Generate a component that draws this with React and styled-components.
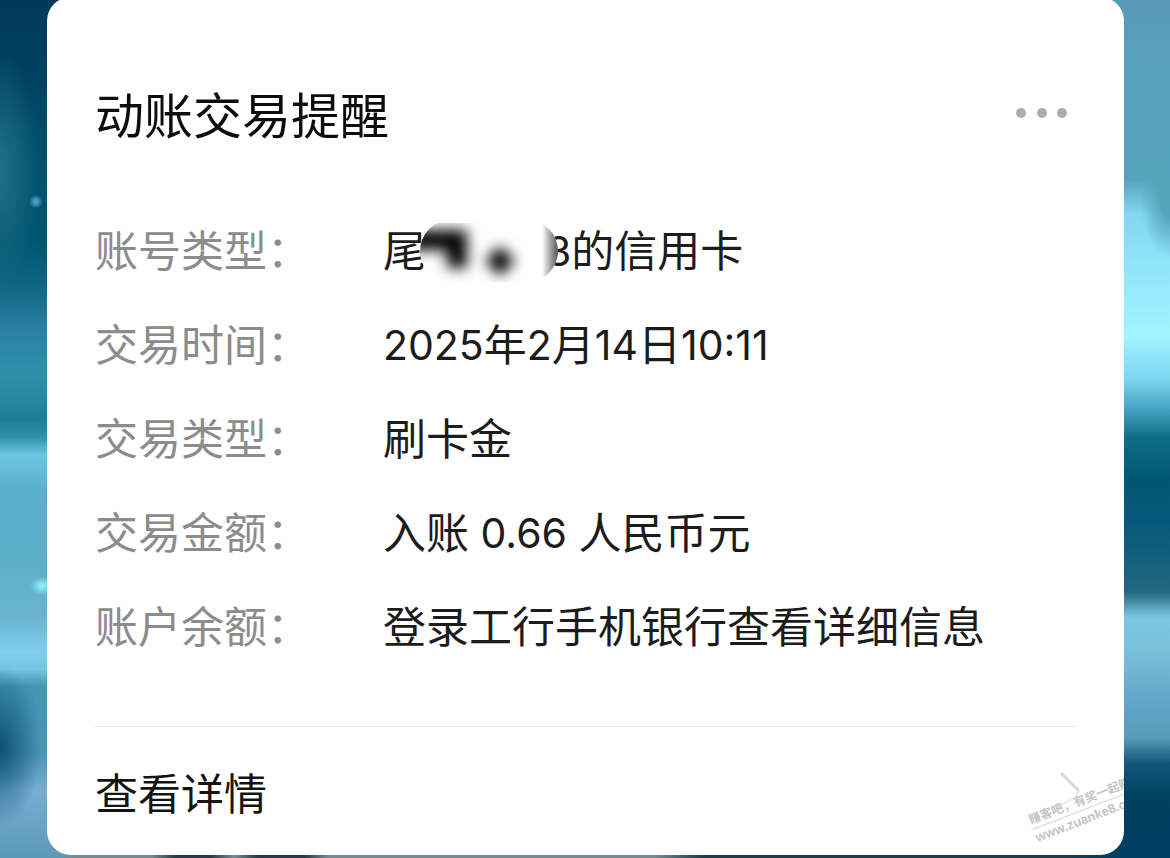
import styled, { createGlobalStyle } from 'styled-components'

const GlobalStyle = createGlobalStyle`
    * {
        box-sizing: border-box;
    }
    body {
        margin: 0;
        font-family: Inter, "Noto Sans CJK SC", sans-serif;
    }
`

const Page = styled.div`
    min-height: 100vh;
    padding: 0 46px 3px 47px;
    overflow: hidden;
    background:
        linear-gradient(90deg, #5a9ab800 4%, #6f8d96 7%, #6f8d96 13%, #1f3d4d 15%, #1f3d4d 18%, #6f8d96 20%, #1f3d4d 22%, #1f3d4d 26%, #6c8c96 28%, #6c8c96 56%, #1c3d50 60%, #1c3d50 90%, #00405f00 94%) bottom / 100% 3px no-repeat,
        radial-gradient(circle at 36px 23.5%, #4a9abf 0, #4a9abf 2px, #4a9abf00 7px),
        radial-gradient(ellipse 12px 9px at 42px 68.3%, #8ff6ff 0, #8ff6ff00 100%),
        radial-gradient(ellipse 40px 120px at 0 20%, #246f88 0, #246f8800 100%),
        radial-gradient(ellipse 42px 80px at 0 87%, #0c5272 0, #0c527200 100%),
        linear-gradient(#003a5a 0%, #00415f 8%, #00506c 18%, #005670 28%, #0e6482 33%, #2a7fa0 38%, #2f90ac 44%, #1f7d98 49%, #2f93ad 51%, #6cc6e0 53%, #5bb0d0 57%, #5eb0c8 66%, #6ab4d0 72%, #80cfee 76%, #74c4e2 78%, #4494b2 80%, #4a96b6 88%, #78aed2 92%, #5a9ab8 100%) left / 50% 100% no-repeat,
        radial-gradient(ellipse 30px 60px at 100% 23%, #58a3bc 0, #58a3bc 30%, #58a3bc00 100%),
        linear-gradient(#5a98b8 0%, #58a2bd 8%, #58a3bc 21%, #82d8f2 25%, #98eafc 34%, #a2f4ff 39%, #7fd8f2 44%, #3f9fbc 48%, #0f6c88 51%, #005674 56%, #06587a 61%, #22687f 69%, #7cc8e2 72%, #78c0da 76%, #62aac8 81%, #5a9cba 86%, #15557a 89%, #00405f 93%, #003f60 100%) right / 50% 100% no-repeat;
`

const Card = styled.main`
    position: relative;
    margin-top: -3px;
    padding: 0 48px;
    border-radius: 24px;
    background: #fff;
    overflow: hidden;
`

const CardHeader = styled.header`
    display: flex;
    align-items: flex-start;
    justify-content: space-between;
    padding: 84px 0 67px;
`

const Title = styled.h1`
    margin: 0;
    color: #0c0c0c;
    font-size: 49px;
    font-weight: 400;
    line-height: 72px;
`

const MoreButton = styled.button`
    display: flex;
    padding: 26px 8px;
    border: none;
    background: none;
    cursor: pointer;
`

const Details = styled.dl`
    display: flex;
    flex-direction: column;
    gap: 32px;
    margin: 0;
    padding-bottom: 68px;
    font-size: 43px;
    line-height: 62px;
`

const Row = styled.div`
    display: grid;
    grid-template-columns: 288px 1fr;
`

const Label = styled.dt`
    color: #8c8c8c;
`

const Value = styled.dd`
    display: flex;
    align-items: center;
    margin: 0;
    color: #1c1c1c;
    white-space: pre;
`

const Digits = styled.span`
    font-size: 41px;
`

const Smudge = styled.svg`
    position: relative;
    flex: none;
    margin: 0 -12px 0 -6px;
`

const CardFooter = styled.footer`
    padding: 34px 0 28px;
    border-top: 1px solid #e4e4e4;
`

const DetailLink = styled.a`
    color: #141414;
    font-size: 43px;
    line-height: 66px;
    text-decoration: none;
`

const Watermark = styled.div`
    position: absolute;
    right: -48px;
    bottom: 34px;
    width: 144px;
    color: #c4c4c4;
    font-family: "Liberation Sans", "Noto Sans CJK SC", sans-serif;
    font-size: 13px;
    font-weight: 700;
    line-height: 17px;
    white-space: nowrap;
    transform: rotate(-21deg);
    pointer-events: none;
`

const Slogan = styled.div`
    border-bottom: 1px solid #d4d4d4;
    font-size: 12px;
`

const Tick = styled.svg`
    position: absolute;
    right: 40px;
    bottom: 45px;
`

function MaskedDigits() {
    return (
        <Smudge width="138" height="62" viewBox="0 0 138 62" aria-hidden="true">
            <defs>
                <clipPath id="pill">
                    <rect width="138" height="62" rx="31" />
                </clipPath>
                <filter id="soft" x="-60%" y="-60%" width="220%" height="220%">
                    <feGaussianBlur stdDeviation="7" />
                </filter>
                <linearGradient id="edge">
                    <stop offset="0" stopColor="#fff" />
                    <stop offset="1" stopColor="#555" />
                </linearGradient>
            </defs>
            <g clipPath="url(#pill)">
                <rect width="138" height="62" fill="#fff" />
                <path d="M-10 20H37V48" fill="none" stroke="#000" strokeWidth="20" filter="url(#soft)" />
                <path d="M80 26L95 41L80 56L65 41Z" fill="#000" filter="url(#soft)" />
                <rect x="122" width="16" height="62" fill="url(#edge)" />
            </g>
        </Smudge>
    )
}

const details = [
    { label: '账号类型', value: <>尾<MaskedDigits /><Digits>3</Digits>的信用卡</> },
    {
        label: '交易时间',
        value: (
            <>
                <Digits>2025</Digits>年<Digits>2</Digits>月<Digits>14</Digits>日<Digits>10:11</Digits>
            </>
        )
    },
    { label: '交易类型', value: '刷卡金' },
    { label: '交易金额', value: <>入账<Digits> 0.66 </Digits>人民币元</> },
    { label: '账户余额', value: '登录工行手机银行查看详细信息' }
]

export default function App() {
    return (
        <>
            <GlobalStyle />
            <Page>
                <Card>
                    <CardHeader>
                        <Title>动账交易提醒</Title>
                        <MoreButton aria-label="更多">
                            <svg width="52" height="12" viewBox="0 0 52 12" fill="#adadad">
                                <circle cx="5" cy="6" r="5" />
                                <circle cx="26" cy="6" r="5" />
                                <circle cx="46" cy="6" r="5" />
                            </svg>
                        </MoreButton>
                    </CardHeader>
                    <Details>
                        {details.map(({ label, value }) => (
                            <Row key={label}>
                                <Label>{label}：</Label>
                                <Value>{value}</Value>
                            </Row>
                        ))}
                    </Details>
                    <CardFooter>
                        <DetailLink href="#detail">查看详情</DetailLink>
                    </CardFooter>
                    <Tick width="30" height="40" viewBox="0 0 30 40" fill="none" stroke="#d8d8d8" strokeWidth="3" aria-hidden="true">
                        <path d="M7 3C12 8 18 14 25 21" />
                        <path d="M25 21C22 27 16 31 8 34" strokeWidth="1" />
                    </Tick>
                    <Watermark>
                        <Slogan>赚客吧，有奖一起赚</Slogan>
                        www.zuanke8.com
                    </Watermark>
                </Card>
            </Page>
        </>
    )
}
